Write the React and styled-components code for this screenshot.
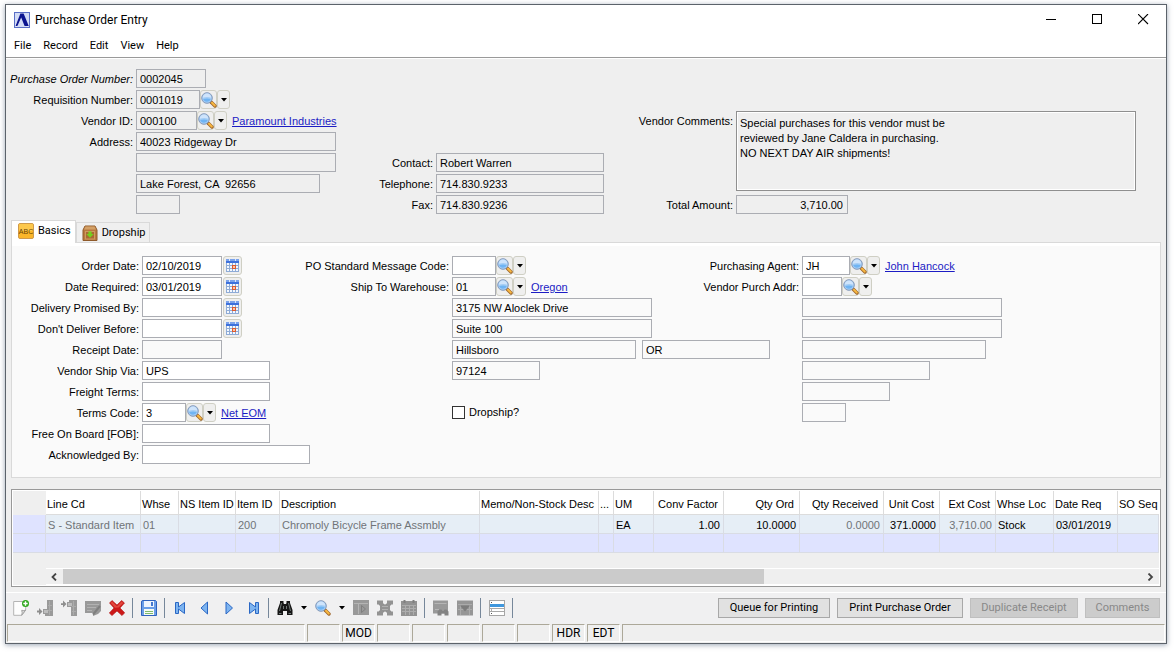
import React from 'react';
import styled, { createGlobalStyle } from 'styled-components';

const Glyph = (props) => <svg width="16" height="16" viewBox="0 0 16 16" aria-hidden="true" {...props} />;

const LogoIcon = () => (
  <Glyph>
    <rect x="0.5" y="0.5" width="15" height="15" fill="#d3dcf6" stroke="#5a6fc6" />
    <path d="M2 14L7.600 3L14 14" fill="none" stroke="#fff" strokeWidth="2" />
    <path d="M1.500 14L6.400 1.500H9.600L14.800 14H10.600L7.200 5.600L3.400 14Z" fill="#0c1590" />
  </Glyph>
);

const LensIcon = () => (
  <Glyph>
    <path d="M10 10L14 14" stroke="#a0682c" strokeWidth="3.4" strokeLinecap="round" />
    <path d="M11 10.800L13.800 13.600" stroke="#f8b840" strokeWidth="2" strokeLinecap="round" />
    <circle cx="6" cy="6" r="5.300" fill="#a3cdf5" stroke="#8699b8" />
    <path d="M1.800 5.800a4.200 4.200 0 0 1 8.400 0q-4 -1.400 -8.400 0z" fill="#cfe4fb" />
    <path d="M2.200 7q3.800 -1.200 7.600 0a4 4 0 0 1 -7.600 0z" fill="#6fb4f3" />
  </Glyph>
);

const CalendarIcon = () => (
  <Glyph width="13" height="13" viewBox="0 0 13 13" shapeRendering="crispEdges">
    <rect width="13" height="13" fill="#f4f8fe" />
    <rect y="1" width="13" height="3" fill="#3c70dc" />
    <path d="M0 1h13" stroke="#7ba2ea" strokeWidth="2" />
    <path d="M3.500 0v2M9.500 0v2" stroke="#dce8fb" />
    <path d="M0.500 4v9M3.500 4v9M6.500 4v9M9.500 4v9M12.500 4v9M0 6.500h13M0 9.500h13M0 12.500h13" stroke="#8eabd6" />
    <rect x="6.500" y="6.500" width="3" height="3" fill="#f9c6b0" stroke="#de5a2c" />
  </Glyph>
);

const BasicsIcon = () => (
  <Glyph>
    <rect x="0.5" y="0.5" width="15" height="15" rx="1.5" fill="#fbb629" stroke="#cf9a4a" />
    <rect x="1" y="1" width="14" height="7" rx="1" fill="#fdc84c" />
    <text x="8" y="11" textAnchor="middle" fontSize="7" fontFamily="Liberation Sans Narrow, Liberation Sans, sans-serif" fill="#6a4404">ABC</text>
  </Glyph>
);

const CrateIcon = () => (
  <Glyph>
    <path d="M3 1h10l2 4v10.500H1V5z" fill="#b87a40" stroke="#8f5a2a" />
    <path d="M3.400 1.600h9.200l1.400 3H2z" fill="#d3a066" />
    <rect x="3.500" y="6.500" width="9" height="7.500" fill="#a86a34" stroke="#d09a60" />
    <path d="M6.400 6.500h3.200v2.500h2.200L8 12.800L4.200 9h2.200z" fill="#74cf1e" />
  </Glyph>
);

const NewIcon = () => (
  <Glyph>
    <path d="M0.700 1.500h12v8.500l-4 5.300h-8z" fill="#fdfdfd" stroke="#b4b4b4" />
    <path d="M8.700 15.300q1 -2.600 0 -5q2.400 .8 4 -.3z" fill="#dcdcdc" stroke="#a4a4a4" />
    <circle cx="12.500" cy="3.500" r="3.500" fill="#2ea81c" />
    <path d="M10.300 3.500h4.400M12.500 1.300v4.400" stroke="#fff" strokeWidth="1.400" />
  </Glyph>
);

const InsertIcon = () => (
  <Glyph>
    <path d="M10 0h6v16h-8v-2h-2v-5h4z" fill="#9a9a9a" />
    <path d="M11 5.500h4M11 10.500h4M12.500 1v14" stroke="#acacac" />
    <path d="M0 10.500h2V8l3.500 3.500L2 15v-2.500H0z" fill="#8e8e8e" />
    <rect x="7" y="10" width="4" height="3" fill="#bdbdbd" />
  </Glyph>
);

const InsertAboveIcon = () => (
  <Glyph>
    <path d="M16 16h-6V7H6V2h2V0h8z" fill="#9a9a9a" />
    <path d="M11 6.500h4M11 11.500h4M12.500 1v14" stroke="#acacac" />
    <path d="M0 3.300h2V0.500l3.500 3.500L2 7.500V5H0z" fill="#8e8e8e" />
    <rect x="7" y="3" width="4" height="3" fill="#bdbdbd" />
  </Glyph>
);

const EditIcon = () => (
  <Glyph>
    <path d="M0 1h16v10l-3 3l-5 2v-3H0z" fill="#999" />
    <path d="M2 4.500h12M2 7.500h9M2 10.500h5" stroke="#b2b2b2" />
    <path d="M8 14.500L15 6" stroke="#7f7f7f" strokeWidth="2" />
  </Glyph>
);

const DeleteIcon = () => (
  <Glyph>
    <path d="M3 0.500L8 5l4.600 -4.500L15.500 3L11 8l4.700 4.800L13 15.600L8 11l-5 4.600L0.300 13L5 8L0.500 3z" fill="#cc1818" stroke="#b01515" strokeWidth="0.6" />
    <path d="M3 1.500L8 6.200L12.500 1.600L14.300 3L9.700 7.600L6 7.800L1.700 3z" fill="#e2483e" />
  </Glyph>
);

const SaveIcon = () => (
  <Glyph>
    <path d="M0.500 2q0 -1.500 1.500 -1.500h12.500l1 1v14h-15z" fill="#6a9ee8" stroke="#2f62bd" />
    <rect x="3" y="1" width="10" height="6" fill="#eef4fd" />
    <rect x="10" y="2" width="2" height="4" fill="#4478cf" />
    <rect x="3" y="9" width="10" height="6" fill="#f7fbf4" />
    <path d="M4 11.500h8M4 13.500h8" stroke="#7fba6c" />
  </Glyph>
);

const arrows = {
  first: 'M2.500 2.500h3v4.500L11.500 2.500v11L5.500 9v4.500h-3z',
  prev: 'M10.500 2v12L4 8z',
  next: 'M5 2v12l6.500 -6z',
  last: 'M13.500 2.500h-3v4.500L4.500 2.500v11l6 -4.500v4.500h3z'
};

const ArrowIcon = ({ kind }) => (
  <Glyph>
    <path d={arrows[kind]} fill="#7db4f0" stroke="#2a67c4" />
  </Glyph>
);

const BinocularsIcon = () => (
  <Glyph>
    <path d="M3 1h3.500v2l.5 1h2l.5 -1V1H13v2l2.500 7v5H10v-4H6v4H0.500v-5L3 3z" fill="#161616" />
    <path d="M4.500 3L2.500 11M11.500 3l2 8M6.500 6v3M9.500 6v3M2 13.500h2.500M11.500 13.500h2.500" stroke="#6f7775" />
  </Glyph>
);

const SideIcon = () => (
  <Glyph>
    <rect width="16" height="15" fill="#999" />
    <path d="M1 3.500h14M5.500 3v11" stroke="#b4b4b4" />
    <path d="M8.500 5.500v7L12.500 9z" fill="none" stroke="#7f7f7f" />
  </Glyph>
);

const NodesIcon = () => (
  <Glyph>
    <path d="M3 3l10 10M13 3L3 13" stroke="#8a8a8a" strokeWidth="4" />
    <path d="M0 0.500h6v4H0zM10 0.500h6v4h-6zM0 11.500h6v4H0zM10 11.500h6v4h-6zM3 4.500h10v7H3z" fill="#939393" />
    <path d="M5 6.500h6M5 9.500h6" stroke="#b0b0b0" />
  </Glyph>
);

const SheetIcon = () => (
  <Glyph>
    <path d="M0 1h16v15H0z" fill="#939393" />
    <path d="M1 5.500h14M1 8.500h14M1 11.500h14M4.500 5v10M8.500 5v10M12.500 5v10" stroke="#adadad" />
    <path d="M3.500 0v3M12.500 0v3" stroke="#808080" strokeWidth="2" />
  </Glyph>
);

const FindCardIcon = () => (
  <Glyph>
    <path d="M0 0.500h15v13H0z" fill="#999" />
    <path d="M1.500 3.500h12M2 9.500h4" stroke="#b5b5b5" />
    <path d="M4.500 15.500v-4l2 -2h2l1 1.500h1l1 -1.500h2l2 2v4h-4v-2h-3v2z" fill="#838383" />
  </Glyph>
);

const FilterIcon = () => (
  <Glyph>
    <path d="M0 0.500h16v15H0z" fill="#969696" />
    <path d="M1 4.500h14M3.500 5v10M12.500 5v10M1 9.500h14" stroke="#ababab" />
    <path d="M3 5.500h10L8 11.500z" fill="#7c7c7c" />
  </Glyph>
);

const ListIcon = () => (
  <Glyph>
    <rect x="0.500" y="0.500" width="15" height="15" fill="#fff" stroke="#a6a6a6" />
    <rect x="1" y="4" width="14" height="3" fill="#3f97dd" />
    <path d="M1 8.500h14M1 11.500h14" stroke="#a8a8a8" />
    <path d="M2 2.500h1M2 10h1M2 13.500h1" stroke="#555" />
  </Glyph>
);

const Caret = () => (
  <svg width="6" height="4" viewBox="0 0 6 4" aria-hidden="true">
    <path d="M0 0h6L3 3.500z" fill="#000" />
  </svg>
);

// label + field rows
const Row = ({ label, id, italic, tall, children }) => (
  <FieldRow $tall={tall}>
    <Label htmlFor={id} $italic={italic}>{label}</Label>
    {children}
  </FieldRow>
);

const Lookup = ({ name }) => (
  <ButtonPair>
    <LookupButton type="button" aria-label={`Look up ${name}`}><LensIcon /></LookupButton>
    <LookupButton type="button" aria-label={`${name} options`} $narrow><Caret /></LookupButton>
  </ButtonPair>
);

const DateRow = ({ label, id, value }) => (
  <Row label={label} id={id}>
    <Field id={id} $w={80} defaultValue={value} />
    <DateButton type="button" aria-label={`Pick ${label}`}><CalendarIcon /></DateButton>
  </Row>
);

const toolGroups = [
  [['New', NewIcon], ['Insert below', InsertIcon, true], ['Insert above', InsertAboveIcon, true], ['Edit line', EditIcon, true], ['Delete', DeleteIcon]],
  [['Save', SaveIcon]],
  [
    ['First', () => <ArrowIcon kind="first" />],
    ['Previous', () => <ArrowIcon kind="prev" />],
    ['Next', () => <ArrowIcon kind="next" />],
    ['Last', () => <ArrowIcon kind="last" />]
  ],
  [['Find', BinocularsIcon, false, true], ['Query', LensIcon, false, true], ['Expand', SideIcon, true], ['Drill down', NodesIcon, true], ['Schedule', SheetIcon, true]],
  [['Find record', FindCardIcon, true], ['Filter', FilterIcon, true]],
  [['List', ListIcon]]
];

const columns = [
  { title: '', width: 33 },
  { title: 'Line Cd', width: 95, value: 'S - Standard Item', dim: true },
  { title: 'Whse', width: 38, value: '01', dim: true },
  { title: 'NS Item ID', width: 57 },
  { title: 'Item ID', width: 44, value: '200', dim: true },
  { title: 'Description', width: 200, value: 'Chromoly Bicycle Frame Assmbly', dim: true },
  { title: 'Memo/Non-Stock Desc', width: 119 },
  { title: '...', width: 15 },
  { title: 'UM', width: 40, value: 'EA' },
  { title: 'Conv Factor', width: 70, value: '1.00', right: true },
  { title: 'Qty Ord', width: 76, value: '10.0000', right: true },
  { title: 'Qty Received', width: 84, value: '0.0000', right: true, dim: true },
  { title: 'Unit Cost', width: 56, value: '371.0000', right: true },
  { title: 'Ext Cost', width: 56, value: '3,710.00', right: true, dim: true },
  { title: 'Whse Loc', width: 58, value: 'Stock' },
  { title: 'Date Req', width: 64, value: '03/01/2019' },
  { title: 'SO Seq' }
];

const statusCells = ['', 'MOD', '', '', '', '', '', 'HDR', 'EDT'];

const comments = `Special purchases for this vendor must be
reviewed by Jane Caldera in purchasing.
NO NEXT DAY AIR shipments!`;

class App extends React.Component {
  render() {
    return (
      <Window>
        <GlobalStyle />
        <TitleBar>
          <LogoIcon />
          <Title>Purchase Order Entry</Title>
          <WindowButton type="button" aria-label="Minimize">
            <svg width="11" height="11"><path d="M0 5.500h10" stroke="#000" /></svg>
          </WindowButton>
          <WindowButton type="button" aria-label="Maximize">
            <svg width="11" height="11"><rect x="0.500" y="0.500" width="9" height="9" fill="none" stroke="#000" /></svg>
          </WindowButton>
          <WindowButton type="button" aria-label="Close">
            <svg width="11" height="11"><path d="M0 0l10 10M10 0L0 10" stroke="#000" strokeWidth="1.100" /></svg>
          </WindowButton>
        </TitleBar>
        <MenuBar>
          {['File', 'Record', 'Edit', 'View', 'Help'].map(item => (
            <MenuItem type="button" key={item}>{item}</MenuItem>
          ))}
        </MenuBar>

        <Header>
          <Column $label={127}>
            <Row label="Purchase Order Number:" id="po" italic>
              <Field id="po" $w={70} readOnly defaultValue="0002045" />
            </Row>
            <Row label="Requisition Number:" id="req">
              <Field id="req" $w={64} readOnly defaultValue="0001019" />
              <Lookup name="requisition" />
            </Row>
            <Row label="Vendor ID:" id="vendor">
              <Field id="vendor" $w={61} readOnly defaultValue="000100" />
              <Lookup name="vendor" />
              <Link href="#vendor">Paramount Industries</Link>
            </Row>
            <Row label="Address:" id="addr">
              <Field id="addr" $w={200} readOnly defaultValue="40023 Ridgeway Dr" />
            </Row>
            <Row><Field aria-label="Address line 2" $w={200} readOnly /></Row>
            <Row><Field aria-label="City, state, zip" $w={184} readOnly defaultValue="Lake Forest, CA  92656" /></Row>
            <Row><Field aria-label="Country" $w={44} readOnly /></Row>
          </Column>
          <Column $label={97}>
            <Row label="Contact:" id="contact"><Field id="contact" $w={168} readOnly defaultValue="Robert Warren" /></Row>
            <Row label="Telephone:" id="phone"><Field id="phone" $w={168} readOnly defaultValue="714.830.9233" /></Row>
            <Row label="Fax:" id="fax"><Field id="fax" $w={168} readOnly defaultValue="714.830.9236" /></Row>
          </Column>
          <Column $label={97}>
            <Row label="Vendor Comments:" id="comments" tall>
              <Comments id="comments" readOnly defaultValue={comments} />
            </Row>
            <Row label="Total Amount:" id="total">
              <Field id="total" $w={112} $right readOnly defaultValue="3,710.00" />
            </Row>
          </Column>
        </Header>

        <Tabs role="tablist">
          <Tab type="button" role="tab" aria-selected="true" $active><BasicsIcon />Basics</Tab>
          <Tab type="button" role="tab" aria-selected="false"><CrateIcon />Dropship</Tab>
        </Tabs>
        <Panel>
          <Column $label={127}>
            <DateRow label="Order Date:" id="orderDate" value="02/10/2019" />
            <DateRow label="Date Required:" id="dateReq" value="03/01/2019" />
            <DateRow label="Delivery Promised By:" id="promised" />
            <DateRow label="Don't Deliver Before:" id="notBefore" />
            <Row label="Receipt Date:" id="receipt"><Field id="receipt" $w={80} readOnly /></Row>
            <Row label="Vendor Ship Via:" id="via"><Field id="via" $w={128} defaultValue="UPS" /></Row>
            <Row label="Freight Terms:" id="freight"><Field id="freight" $w={128} /></Row>
            <Row label="Terms Code:" id="terms">
              <Field id="terms" $w={44} defaultValue="3" />
              <Lookup name="terms" />
              <Link href="#terms">Net EOM</Link>
            </Row>
            <Row label="Free On Board [FOB]:" id="fob"><Field id="fob" $w={128} /></Row>
            <Row label="Acknowledged By:" id="ack"><Field id="ack" $w={168} /></Row>
          </Column>
          <Column $label={139}>
            <Row label="PO Standard Message Code:" id="msg">
              <Field id="msg" $w={44} />
              <Lookup name="message code" />
            </Row>
            <Row label="Ship To Warehouse:" id="whse">
              <Field id="whse" $w={44} readOnly defaultValue="01" />
              <Lookup name="warehouse" />
              <Link href="#whse">Oregon</Link>
            </Row>
            <Row><Field aria-label="Ship to street" $w={200} readOnly defaultValue="3175 NW Aloclek Drive" /></Row>
            <Row><Field aria-label="Ship to suite" $w={200} readOnly defaultValue="Suite 100" /></Row>
            <Row>
              <Field aria-label="Ship to city" $w={184} readOnly defaultValue="Hillsboro" />
              <StateField aria-label="Ship to state" $w={128} readOnly defaultValue="OR" />
            </Row>
            <Row><Field aria-label="Ship to zip" $w={88} readOnly defaultValue="97124" /></Row>
            <Row />
            <Row>
              <CheckLabel><Checkbox type="checkbox" />Dropship?</CheckLabel>
            </Row>
          </Column>
          <Column $label={139}>
            <Row label="Purchasing Agent:" id="agent">
              <Field id="agent" $w={48} defaultValue="JH" />
              <Lookup name="agent" />
              <Link href="#agent">John Hancock</Link>
            </Row>
            <Row label="Vendor Purch Addr:" id="purch">
              <Field id="purch" $w={40} />
              <Lookup name="purchase address" />
            </Row>
            {[200, 200, 184, 128, 88, 44].map((w, i) => (
              <Row key={i}><Field aria-label={`Purchase address line ${i + 1}`} $w={w} readOnly /></Row>
            ))}
          </Column>
        </Panel>

        <GridBox>
          <Table>
            <colgroup>
              {columns.map((col, i) => <col key={i} width={col.width} />)}
            </colgroup>
            <thead>
              <tr>{columns.map((col, i) => <HeadCell key={i} $right={col.right}>{col.title}</HeadCell>)}</tr>
            </thead>
            <tbody>
              <BodyRow $current>
                {columns.map((col, i) => <Cell key={i} $right={col.right} $dim={col.dim}>{col.value}</Cell>)}
              </BodyRow>
              <BodyRow>{columns.map((col, i) => <Cell key={i} />)}</BodyRow>
            </tbody>
          </Table>
          <ScrollBar>
            <ScrollArrow type="button" aria-label="Scroll left">
              <svg width="7" height="8"><path d="M5 0.500L1.500 4L5 7.500" fill="none" stroke="#444" strokeWidth="1.800" /></svg>
            </ScrollArrow>
            <ScrollTrack><ScrollThumb /></ScrollTrack>
            <ScrollArrow type="button" aria-label="Scroll right">
              <svg width="7" height="8"><path d="M1.500 0.500L5 4L1.500 7.500" fill="none" stroke="#444" strokeWidth="1.800" /></svg>
            </ScrollArrow>
          </ScrollBar>
        </GridBox>

        <ToolBar>
          {toolGroups.map((group, i) => (
            <ToolGroup key={i}>
              {group.map(([name, Icon, disabled, menu]) => (
                <React.Fragment key={name}>
                  <ToolButton type="button" aria-label={name} disabled={disabled}><Icon /></ToolButton>
                  {menu ? <ToolButton type="button" aria-label={`${name} menu`} $menu><Caret /></ToolButton> : null}
                </React.Fragment>
              ))}
            </ToolGroup>
          ))}
          <Actions>
            <ActionButton type="button" $w={112}>Queue for Printing</ActionButton>
            <ActionButton type="button" $w={126}>Print Purchase Order</ActionButton>
            <ActionButton type="button" $w={108} disabled>Duplicate Receipt</ActionButton>
            <ActionButton type="button" $w={75} disabled>Comments</ActionButton>
          </Actions>
        </ToolBar>
        <StatusBar>
          <StatusCell $w={298} />
          {statusCells.map((text, i) => <StatusCell key={i} $w={33}>{text}</StatusCell>)}
          <StatusCell $grow />
        </StatusBar>
      </Window>
    );
  }
}

const uiFont = 'Roboto, "Open Sans", sans-serif';

const GlobalStyle = createGlobalStyle`
  * {
    box-sizing: border-box;
  }
  body {
    margin: 0;
    background: #fff;
    color: #000;
    font: 11px/15px "Liberation Sans", Arial, sans-serif;
  }
  button, input, textarea {
    font: inherit;
    color: inherit;
    margin: 0;
  }
  svg {
    display: block;
    flex: none;
  }
`;

const Window = styled.div`
  margin: 4px 9px 9px 5px;
  border: 1px solid #5c636b;
  background: #efefef;
  box-shadow: 0 1px 5px rgba(60, 80, 110, 0.5);
`;

const TitleBar = styled.header`
  display: flex;
  align-items: center;
  height: 29px;
  padding-left: 8px;
  background: #fff;
`;

const Title = styled.h1`
  flex: 1;
  margin: 0 0 0 5px;
  font: 12px/16px ${uiFont};
`;

const WindowButton = styled.button`
  display: flex;
  align-items: center;
  justify-content: center;
  width: 46px;
  height: 29px;
  padding: 0;
  border: 0;
  background: none;
`;

const MenuBar = styled.nav`
  display: flex;
  align-items: center;
  height: 24px;
  padding-left: 2px;
  background: #fff;
  border-bottom: 1px solid #9a9a9a;
`;

const MenuItem = styled.button`
  padding: 0 6px;
  border: 0;
  background: none;
  font: 11px/16px ${uiFont};
`;

const Header = styled.section`
  display: grid;
  grid-template-columns: 330px 300px minmax(0, 1fr);
  align-items: end;
  padding: 10px 30px 6px 0;
  border-top: 1px solid #fff;
`;

const Column = styled.div`
  display: flex;
  flex-direction: column;
  gap: 2px;
  --label: ${props => props.$label}px;
`;

const FieldRow = styled.div`
  display: flex;
  align-items: flex-start;
  height: ${props => props.$tall ? 82 : 19}px;
`;

const Label = styled.label`
  flex: none;
  width: var(--label);
  margin-right: 3px;
  display: flex;
  justify-content: flex-end;
  line-height: 20px;
  white-space: nowrap;
  font-style: ${props => props.$italic ? 'italic' : 'normal'};
`;

const Field = styled.input`
  flex: none;
  width: ${props => props.$w}px;
  height: 19px;
  padding: 1px 4px 0 3px;
  border: 1px solid #abadb3;
  outline: 0;
  background: ${props => props.readOnly ? 'transparent' : '#fff'};
  text-align: ${props => props.$right ? 'right' : 'left'};
`;

const StateField = styled(Field)`
  margin-left: 6px;
`;

const Comments = styled.textarea`
  flex: 1;
  max-width: 400px;
  height: 80px;
  padding: 4px 3px;
  border: 1px solid #8f8f8f;
  outline: 0;
  box-shadow: inset 0 0 0 1px #fff;
  background: transparent;
  resize: none;
`;

const ButtonPair = styled.span`
  display: flex;
  margin-right: 3px;
`;

const LookupButton = styled.button`
  display: flex;
  align-items: center;
  justify-content: center;
  width: ${props => props.$narrow ? 13 : 17}px;
  height: 19px;
  padding: 0;
  border: 1px solid #cfcfc4;
  border-radius: 3px;
  background: #efefee;
`;

const DateButton = styled(LookupButton)`
  width: 19px;
  margin-left: 1px;
`;

const Link = styled.a`
  color: #1c1cc4;
  line-height: 20px;
  padding-left: 2px;
  white-space: nowrap;
  text-decoration: underline;
`;

const Tabs = styled.div`
  display: flex;
  align-items: flex-end;
  height: 22px;
  padding-left: 5px;
`;

const Tab = styled.button`
  display: flex;
  align-items: center;
  gap: 4px;
  height: ${props => props.$active ? 23 : 20}px;
  margin-bottom: ${props => props.$active ? -1 : 0}px;
  padding: ${props => props.$active ? '0 4px 2px 6px' : '0 3px 0 5px'};
  border: 1px solid #d9d9d9;
  border-bottom: 0;
  background: ${props => props.$active ? '#fff' : '#efefef'};
  font: 11px/16px ${uiFont};
  z-index: 1;
`;

const Panel = styled.section`
  display: grid;
  grid-template-columns: 298px 350px minmax(0, 1fr);
  margin: 0 5px 11px;
  padding: 13px 0;
  border: 1px solid #d9d9d9;
  background: #fafafa;
  box-shadow: inset 0 3px #fff;
`;

const CheckLabel = styled.label`
  display: flex;
  align-items: center;
  gap: 4px;
  height: 19px;
`;

const Checkbox = styled.input`
  appearance: none;
  width: 13px;
  height: 13px;
  border: 1px solid #333;
  background: #fff;
`;

const GridBox = styled.section`
  margin: 0 5px;
  padding: 1px;
  border: 1px solid #999;
  box-shadow: inset 0 0 0 1px #fff;
`;

const Table = styled.table`
  width: 100%;
  table-layout: fixed;
  border-collapse: separate;
  border-spacing: 0;
  margin-bottom: 15px;
`;

const HeadCell = styled.th`
  height: 24px;
  padding: 3px ${props => props.$right ? 5 : 0}px 0 1px;
  background: #fff;
  border-right: 1px solid #dcdcdc;
  border-bottom: 1px solid #dcdcdc;
  font-weight: normal;
  text-align: ${props => props.$right ? 'right' : 'left'};
  white-space: nowrap;
  overflow: hidden;

  &:first-child {
    background: #efefef;
    border-color: #efefef;
  }
  &:last-child {
    border-right: 0;
  }
`;

const BodyRow = styled.tr`
  background: ${props => props.$current ? '#e6eef6' : '#dfe3ff'};
`;

const Cell = styled.td`
  height: 19px;
  padding: 2px 3px 0 2px;
  border-right: 1px solid #d9dce4;
  border-bottom: 1px solid #d9dce4;
  color: ${props => props.$dim ? '#707478' : '#000'};
  text-align: ${props => props.$right ? 'right' : 'left'};
  white-space: nowrap;
  overflow: hidden;

  &:first-child {
    background: #dfe3ff;
  }
`;

const ScrollBar = styled.div`
  display: flex;
  height: 17px;
  margin-left: 33px;
  border-top: 1px solid #fff;
  border-bottom: 1px solid #fff;
`;

const ScrollArrow = styled.button`
  display: flex;
  align-items: center;
  justify-content: center;
  width: 17px;
  padding: 0;
  border: 0;
  background: none;
`;

const ScrollTrack = styled.div`
  flex: 1;
`;

const ScrollThumb = styled.div`
  width: 65%;
  height: 15px;
  background: #cbcbcb;
`;

const ToolBar = styled.div`
  display: flex;
  align-items: center;
  height: 32px;
  margin-top: 5px;
  padding: 0 6px 1px 7px;
  border-top: 1px solid #fff;
  background: #f0f0f1;
`;

const ToolGroup = styled.div`
  display: flex;
  align-items: center;
  gap: 8px;
  height: 20px;
  padding-right: 7px;
  margin-right: 8px;
  border-right: 1px solid #76879a;
`;

const ToolButton = styled.button`
  display: flex;
  align-items: center;
  justify-content: center;
  width: ${props => props.$menu ? 6 : 16}px;
  height: 16px;
  padding: 0;
  border: 0;
  background: none;
`;

const Actions = styled.div`
  display: flex;
  gap: 7px;
  margin-left: auto;
`;

const ActionButton = styled.button`
  width: ${props => props.$w}px;
  height: 20px;
  padding: 0;
  border: 1px solid ${props => props.disabled ? '#bfbfbf' : '#a8a8a8'};
  background: ${props => props.disabled ? '#cccccc' : '#e1e1e1'};
  color: ${props => props.disabled ? '#888' : '#000'};
  font: 11px/16px ${uiFont};
  white-space: nowrap;
`;

const StatusBar = styled.footer`
  display: flex;
  gap: 2px;
  padding: 0 1px 1px;
`;

const StatusCell = styled.div`
  flex: ${props => props.$grow ? '1' : 'none'};
  width: ${props => props.$grow ? 'auto' : props.$w + 'px'};
  height: 18px;
  border: 1px solid #fff;
  border-top-color: #aca899;
  border-left-color: #aca899;
  font: 12px/16px ${uiFont};
  text-align: center;
`;

export default App;
